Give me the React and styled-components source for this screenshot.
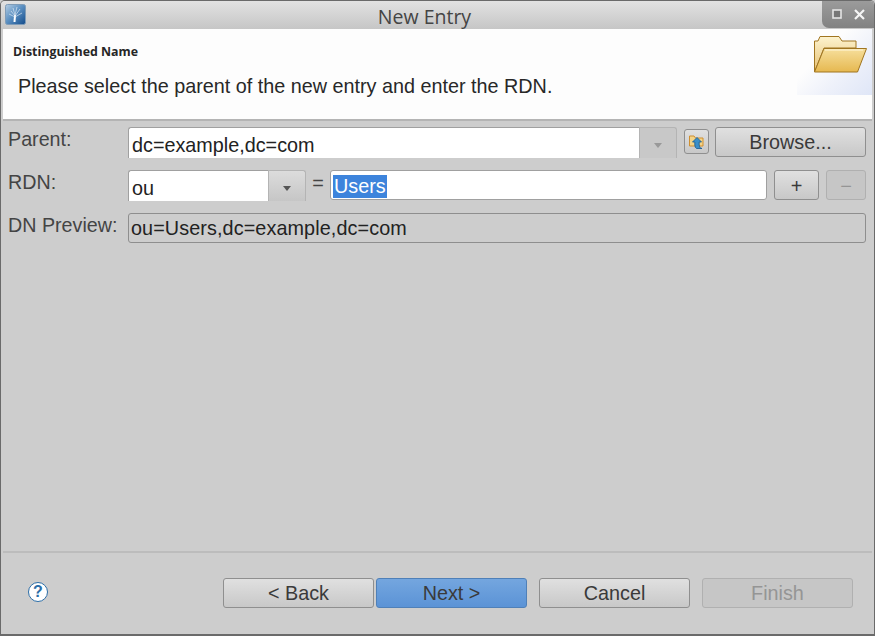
import React from "react";
import styled, { createGlobalStyle } from "styled-components";

const Global = createGlobalStyle`
  html, body { margin: 0; padding: 0; background: #cdcdcd; }
  * { box-sizing: border-box; }
`;

const Win = styled.div`
  width: 875px;
  height: 636px;
  display: flex;
  flex-direction: column;
  background: #cdcdcd;
  border: solid #6a6a6a;
  border-width: 1px 1px 2px 1px;
  border-radius: 5px 5px 0 0;
  overflow: hidden;
  font-family: "Liberation Sans", Arial, sans-serif;
  color: #2e2e2e;
`;

const TitleBar = styled.div`
  height: 28px;
  flex: none;
  display: flex;
  align-items: flex-start;
  background: linear-gradient(#e2e2e2, #c6c6c6);
`;

const AppIcon = styled.svg`
  width: 21px;
  height: 21px;
  margin: 3px 0 0 4px;
  flex: none;
`;

const Title = styled.div`
  flex: 1;
  text-align: center;
  font-family: "Open Sans", sans-serif;
  font-size: 19.5px;
  line-height: 31px;
  padding-left: 1px;
  color: #444;
`;

const WinButtons = styled.div`
  width: 52px;
  height: 28px;
  margin-top: -1px;
  flex: none;
  display: flex;
  align-items: center;
  justify-content: center;
  gap: 12px;
  background: linear-gradient(#9c9c9c, #828282);
  border-radius: 0 0 0 7px;
`;

const Banner = styled.div`
  height: 92px;
  flex: none;
  margin: 0 2px;
  background: #fdfdfd;
  border-bottom: 2px solid #b4b4b4;
  position: relative;
  padding: 15px 0 0 10px;
`;

const BannerTitle = styled.div`
  font-family: "Open Sans", sans-serif;
  font-size: 12.4px;
  font-weight: 700;
  line-height: 16px;
  color: #262626;
`;

const BannerText = styled.div`
  margin: 15px 0 0 5px;
  font-size: 19.8px;
  line-height: 22px;
  color: #282828;
`;

const BannerArt = styled.div`
  position: absolute;
  top: 0;
  right: 0;
  width: 75px;
  height: 66px;
  background: linear-gradient(315deg, #dfe6f7 0%, #eef1fa 35%, #fdfdfd 65%);
`;

const FolderIcon = styled.svg`
  position: absolute;
  top: 6px;
  right: 3px;
  width: 56px;
  height: 40px;
`;

const Form = styled.div`
  flex: 1;
  display: grid;
  grid-template-columns: 127px 1fr;
  grid-auto-rows: 43px;
  padding: 6px 8px 0 0;
`;

const Label = styled.div`
  padding: 1px 0 0 7px;
  font-size: 19.7px;
  line-height: 22px;
  color: #444;
  white-space: nowrap;
`;

const Row = styled.div`
  display: flex;
  align-items: flex-start;
`;

const Field = styled.div`
  height: 30px;
  display: flex;
  align-items: center;
  padding: 1px 0 0 2px;
  font-size: 19.8px;
  letter-spacing: ${(p) => (p.$readOnly ? "0.1px" : "0")};
  background: ${(p) => (p.$readOnly ? "#cdcdcd" : "#fff")};
  border: 1px solid ${(p) => (p.$readOnly ? "#8e8e8e" : "#a0a0a0")};
  border-radius: 3px;
  color: #222;
  flex: ${(p) => (p.$grow ? 1 : "none")};
`;

const Combo = styled.div`
  display: flex;
  height: 31px;
  width: ${(p) => p.$width};
  flex: none;
`;

const ComboText = styled.div`
  flex: 1;
  display: flex;
  align-items: center;
  padding: 5px 0 0 3px;
  font-size: 19.8px;
  background: #fff;
  color: #222;
  border: 1px solid #a0a0a0;
  border-right: none;
  border-bottom: none;
  border-radius: 3px 0 0 0;
`;

const ComboArrow = styled.div`
  width: 38px;
  flex: none;
  display: flex;
  align-items: center;
  justify-content: center;
  padding-top: 4px;
  background: ${(p) => (p.$disabled ? "#c8c8c8" : "linear-gradient(#dcdcdc, #c6c6c6)")};
  border: 1px solid #b4b4b4;
  border-bottom: none;
  border-radius: 0 3px 0 0;
  &::after {
    content: "";
    border-left: 4px solid transparent;
    border-right: 4px solid transparent;
    border-top: 5px solid ${(p) => (p.$disabled ? "#999" : "#555")};
  }
`;

const Button = styled.div`
  height: 30px;
  display: flex;
  align-items: center;
  justify-content: center;
  flex: none;
  width: ${(p) => p.$width};
  margin-left: ${(p) => p.$ml || 0};
  font-size: 19.8px;
  border-radius: 3px;
  color: ${(p) => (p.$disabled ? "#959595" : "#3a3a3a")};
  border: 1px solid ${(p) => (p.$primary ? "#4f80b8" : p.$disabled ? "#b0b0b0" : "#8f8f8f")};
  background: ${(p) =>
    p.$primary
      ? "linear-gradient(#74a6df, #5b93d6)"
      : p.$disabled
        ? "#c6c6c6"
        : "linear-gradient(#e0e0e0, #c8c8c8)"};
`;

const SmallButton = styled(Button)`
  font-size: 20px;
  padding-top: 2px;
`;

const IconButton = styled.div`
  width: 25px;
  height: 25px;
  margin: 2px 0 0 7px;
  flex: none;
  display: flex;
  align-items: center;
  justify-content: center;
  border: 1px solid #8f8f8f;
  border-radius: 3px;
  background: linear-gradient(#e0e0e0, #c8c8c8);
`;

const Equals = styled.div`
  width: 24px;
  flex: none;
  text-align: center;
  font-size: 19.8px;
  line-height: 26px;
  color: #444;
`;

const Selected = styled.span`
  background: #3d84dc;
  color: #fff;
  padding: 0 1px;
  margin-top: 1px;
  line-height: 23px;
`;

const Footer = styled.div`
  height: 83px;
  flex: none;
  margin: 0 2px;
  border-top: 2px solid #bcbcbc;
  display: flex;
  align-items: flex-start;
  padding: 25px 19px 0 0;
`;

const Help = styled.div`
  width: 20px;
  height: 20px;
  margin: 4px 0 0 25px;
  flex: none;
  display: flex;
  align-items: center;
  justify-content: center;
  border: 1.5px solid #2c6ea8;
  border-radius: 50%;
  background: #fff;
  color: #2c6ea8;
  font-size: 16px;
  font-weight: 700;
`;

const Nav = styled.div`
  margin-left: auto;
  display: flex;
  gap: 12px;
`;

const Pair = styled.div`
  display: flex;
  gap: 2px;
`;

export default function App() {
  return (
    <Win>
      <Global />
      <TitleBar>
        <AppIcon viewBox="0 0 21 21">
          <defs>
            <linearGradient id="appBg" x1="0" y1="0" x2="1" y2="1">
              <stop offset="0" stopColor="#b5cde2" />
              <stop offset="0.45" stopColor="#5f93c4" />
              <stop offset="1" stopColor="#114a8a" />
            </linearGradient>
          </defs>
          <rect x="0.5" y="0.5" width="20" height="20" rx="2" fill="url(#appBg)" stroke="#7f9cb8" />
          <path d="M9.5 18 L10 11" stroke="#fff" strokeWidth="2" fill="none" />
          <path
            d="M10 12 L6 7 M10 11 L8 4 M10 11 L12 3 M10 12 L15 5 M10 13 L17 9 M10 13 L4 10"
            stroke="#e6eef6"
            strokeWidth="0.8"
            fill="none"
            opacity="0.8"
          />
        </AppIcon>
        <Title>New Entry</Title>
        <WinButtons>
          <svg width="10" height="10" viewBox="0 0 10 10">
            <rect x="1" y="1" width="8" height="8" fill="#777" stroke="#e4e4e4" strokeWidth="1.6" />
          </svg>
          <svg width="11" height="11" viewBox="0 0 11 11">
            <path d="M1 1 L10 10 M10 1 L1 10" stroke="#f4f4f4" strokeWidth="2.2" />
          </svg>
        </WinButtons>
      </TitleBar>
      <Banner>
        <BannerTitle>Distinguished Name</BannerTitle>
        <BannerText>Please select the parent of the new entry and enter the RDN.</BannerText>
        <BannerArt>
          <FolderIcon viewBox="0 0 56 40">
            <defs>
              <linearGradient id="folderBack" x1="0" y1="0" x2="0" y2="1">
                <stop offset="0" stopColor="#fdf3cf" />
                <stop offset="1" stopColor="#e6c070" />
              </linearGradient>
              <linearGradient id="folderFront" x1="0" y1="0" x2="0" y2="1">
                <stop offset="0" stopColor="#f6df9c" />
                <stop offset="1" stopColor="#e6b850" />
              </linearGradient>
            </defs>
            <path d="M1.5 37 V6 H5 L7 1.5 H26 L29 6 H43 V13 H11 L1.5 37 Z" fill="url(#folderBack)" stroke="#a07520" />
            <path d="M11 13.5 H53.5 L44.5 37 H1.5 Z" fill="url(#folderFront)" stroke="#a07520" />
            <path d="M12 15 H50 " stroke="#fff7dc" strokeWidth="1" />
          </FolderIcon>
        </BannerArt>
      </Banner>
      <Form>
        <Label>Parent:</Label>
        <Row>
          <Combo $width="549px">
            <ComboText>dc=example,dc=com</ComboText>
            <ComboArrow $disabled />
          </Combo>
          <IconButton>
            <svg width="17" height="17" viewBox="0 0 17 17">
              <path d="M1.5 13 V3 H6 L7.5 5 H15 V13 Z" fill="#f3d489" stroke="#d08f2e" />
              <path
                d="M9 4.5 L13.5 9 H11.2 V12 Q11.2 15.5 14 15.5 H8.5 Q6.8 14.5 6.8 12 V9 H4.5 Z"
                fill="#3b8fc9"
                stroke="#175a92"
                strokeWidth="0.8"
              />
            </svg>
          </IconButton>
          <Button $width="151px" $ml="6px">Browse...</Button>
        </Row>
        <Label>RDN:</Label>
        <Row>
          <Combo $width="178px">
            <ComboText>ou</ComboText>
            <ComboArrow />
          </Combo>
          <Equals>=</Equals>
          <Field $grow>
            <Selected>Users</Selected>
          </Field>
          <SmallButton $width="45px" $ml="7px">+</SmallButton>
          <SmallButton $width="40px" $ml="7px" $disabled>−</SmallButton>
        </Row>
        <Label>DN Preview:</Label>
        <Row>
          <Field $grow $readOnly>ou=Users,dc=example,dc=com</Field>
        </Row>
      </Form>
      <Footer>
        <Help>?</Help>
        <Nav>
          <Pair>
            <Button $width="151px">&lt; Back</Button>
            <Button $width="151px" $primary>Next &gt;</Button>
          </Pair>
          <Button $width="151px">Cancel</Button>
          <Button $width="151px" $disabled>Finish</Button>
        </Nav>
      </Footer>
    </Win>
  );
}
